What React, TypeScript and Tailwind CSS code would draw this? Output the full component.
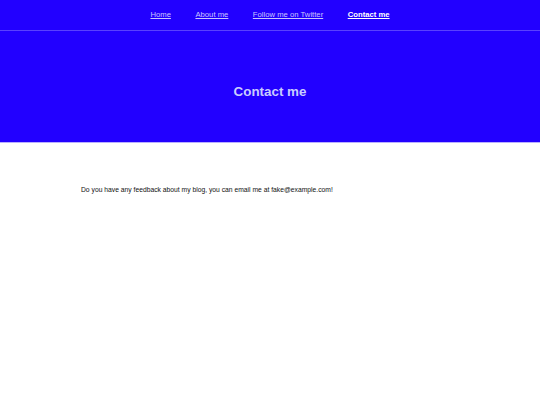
export default function App() {
  const links = ['Home', 'About me', 'Follow me on Twitter']
  return (
    <div className="min-h-[405px] bg-white font-['Liberation_Sans',Arial,sans-serif]">
      <header className="h-[143px] border-b border-[#b9b0ff] bg-[#2200ff]">
        <nav className="flex h-[31px] items-center justify-center gap-[24.5px] border-b border-white/25 text-[7.7px]">
          {links.map((l) => (
            <a key={l} href="#" className="text-[#c9c4ff] underline">
              {l}
            </a>
          ))}
          <a href="#" className="font-bold text-white underline">
            Contact me
          </a>
        </nav>
        <h1 className="pt-[52px] text-center text-[13.4px] font-bold leading-[18px] text-[#c9ccff]">Contact me</h1>
      </header>
      <p className="pl-[81px] pt-[42px] text-[6.75px] leading-[9px] text-[#111]">
        Do you have any feedback about my blog, you can email me at fake@example.com!
      </p>
    </div>
  )
}
